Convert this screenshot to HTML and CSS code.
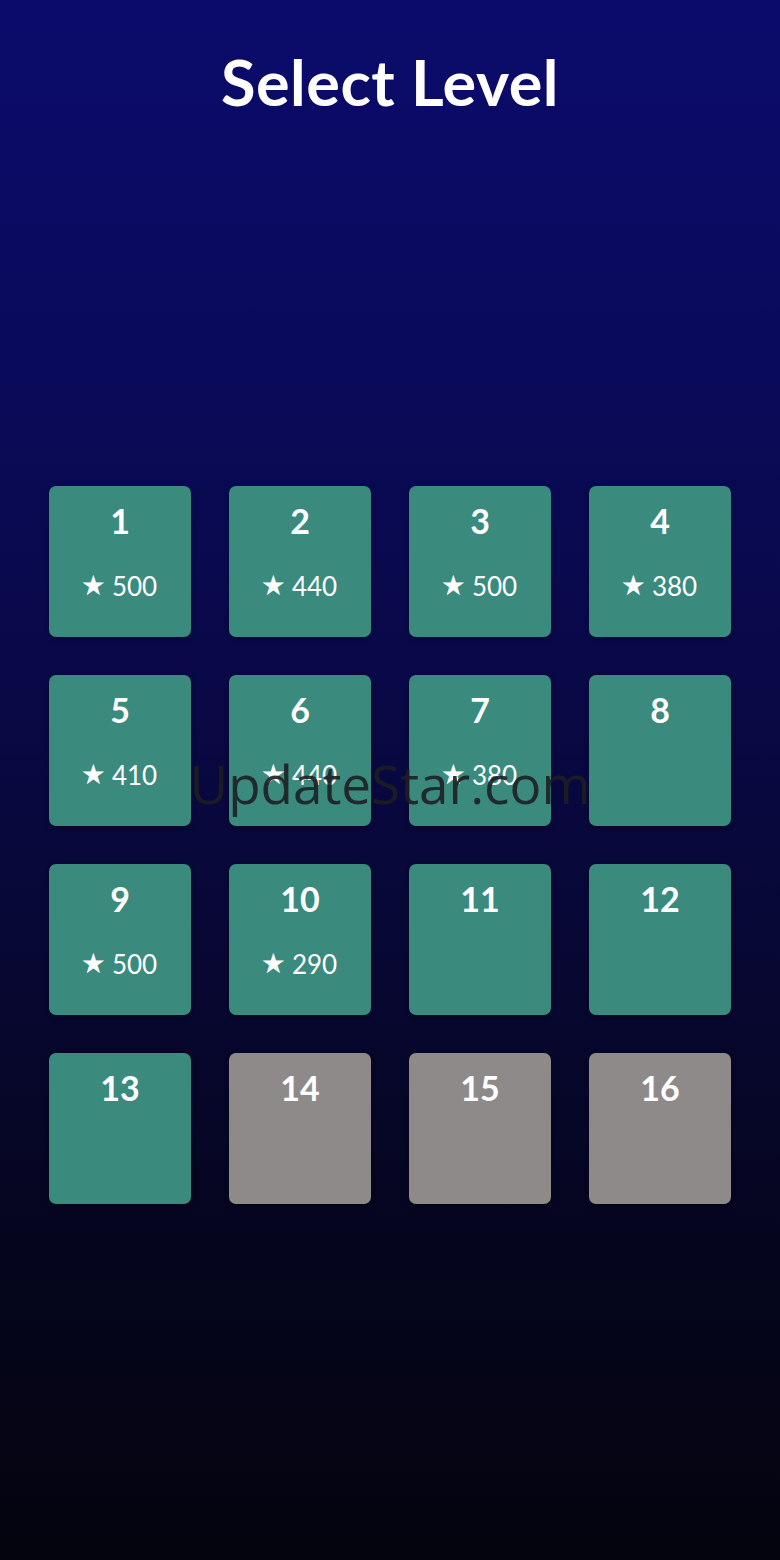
FILE: index.html
```
<!DOCTYPE html>
<html lang="en">
<head>
<meta charset="utf-8">
<title>Select Level</title>
<link rel="stylesheet" href="styles.css">
</head>
<body>
<main class="screen">
  <h1 class="title">Select Level</h1>
  <section class="grid">
    <div class="tile open"><span class="num">1</span><span class="score"><span class="star">★</span>500</span></div>
    <div class="tile open"><span class="num">2</span><span class="score"><span class="star">★</span>440</span></div>
    <div class="tile open"><span class="num">3</span><span class="score"><span class="star">★</span>500</span></div>
    <div class="tile open"><span class="num">4</span><span class="score"><span class="star">★</span>380</span></div>
    <div class="tile open"><span class="num">5</span><span class="score"><span class="star">★</span>410</span></div>
    <div class="tile open"><span class="num">6</span><span class="score"><span class="star">★</span>440</span></div>
    <div class="tile open"><span class="num">7</span><span class="score"><span class="star">★</span>380</span></div>
    <div class="tile open"><span class="num">8</span></div>
    <div class="tile open"><span class="num">9</span><span class="score"><span class="star">★</span>500</span></div>
    <div class="tile open"><span class="num">10</span><span class="score"><span class="star">★</span>290</span></div>
    <div class="tile open"><span class="num">11</span></div>
    <div class="tile open"><span class="num">12</span></div>
    <div class="tile open"><span class="num">13</span></div>
    <div class="tile locked"><span class="num">14</span></div>
    <div class="tile locked"><span class="num">15</span></div>
    <div class="tile locked"><span class="num">16</span></div>
  </section>
  <div class="watermark">UpdateStar.com</div>
</main>
</body>
</html>
```
FILE: styles.css
```
html, body {
  margin: 0;
  padding: 0;
}
body {
  width: 780px;
  height: 1560px;
  overflow: hidden;
  font-family: "Lato", "Noto Sans", sans-serif;
  color: #ffffff;
}
.screen {
  position: relative;
  height: 1560px;
  box-sizing: border-box;
  padding-top: 44px;
  background: linear-gradient(to bottom, #0b0b6c 0%, #0a0a5e 19%, #09094a 41%, #070730 64%, #05051e 80%, #04040e 100%);
}
.title {
  margin: 0;
  text-align: center;
  font-size: 63px;
  font-weight: 700;
  line-height: 76px;
  letter-spacing: 0.5px;
}
.grid {
  margin: 366px 0 0 49px;
  display: grid;
  grid-template-columns: repeat(4, 142px);
  grid-auto-rows: 151px;
  column-gap: 38px;
  row-gap: 38px;
}
.tile {
  border-radius: 7px;
  display: flex;
  flex-direction: column;
  align-items: center;
  box-shadow: 0 2px 4px rgba(0, 0, 0, 0.35);
}
.open {
  background: #3a8a7e;
}
.locked {
  background: #8f8a8a;
}
.num {
  margin-top: 15px;
  font-size: 34px;
  font-weight: 700;
  line-height: 40px;
}
.score {
  margin-top: 30px;
  font-size: 26px;
  font-weight: 400;
  line-height: 30px;
  display: flex;
  align-items: center;
  margin-left: -2px;
}
.star {
  font-family: "DejaVu Sans", sans-serif;
  font-size: 28px;
  margin-right: 6px;
}
.watermark {
  position: absolute;
  left: 0;
  right: 0;
  top: 749px;
  text-align: center;
  font-family: "Open Sans", "Noto Sans", sans-serif;
  font-size: 53px;
  line-height: 70px;
  color: rgba(30, 30, 34, 0.9);
  pointer-events: none;
}
```
